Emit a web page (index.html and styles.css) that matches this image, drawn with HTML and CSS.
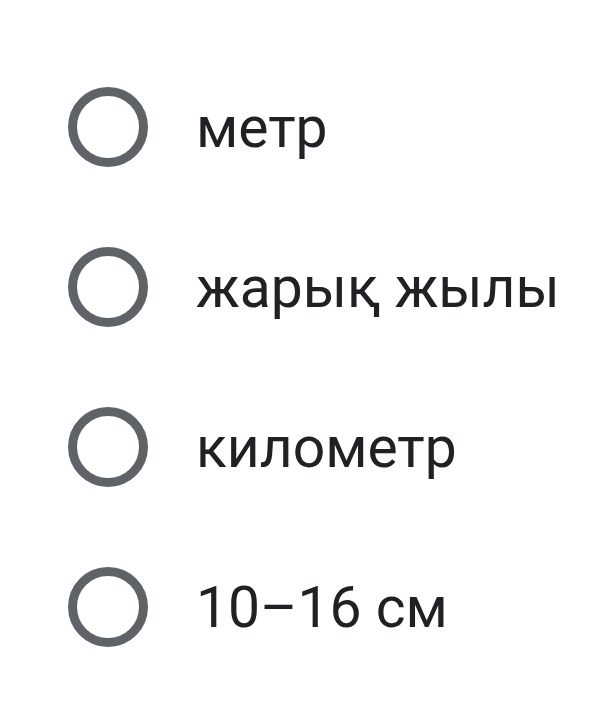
FILE: index.html
```html
<!DOCTYPE html>
<html>
<head>
<meta charset="utf-8">
<link rel="stylesheet" href="styles.css">
</head>
<body>
<div class="options">
  <div class="option"><span class="radio"></span><span class="label">метр</span></div>
  <div class="option"><span class="radio"></span><span class="label">жарық жылы</span></div>
  <div class="option"><span class="radio"></span><span class="label">километр</span></div>
  <div class="option"><span class="radio"></span><span class="label">10–16 см</span></div>
</div>
</body>
</html>
```
FILE: styles.css
```css
html, body {
  margin: 0;
  padding: 0;
  background: #ffffff;
}
.options {
  display: flex;
  flex-direction: column;
  padding-top: 47px;
  padding-left: 68px;
}
.option {
  display: flex;
  align-items: center;
  height: 160px;
  gap: 48px;
}
.radio {
  box-sizing: border-box;
  width: 80px;
  height: 80px;
  border: 9px solid #5f6368;
  border-radius: 50%;
  flex: none;
}
.label {
  font-family: Roboto, "Noto Sans", sans-serif;
  font-size: 57px;
  color: #202124;
  line-height: 1;
}
```
